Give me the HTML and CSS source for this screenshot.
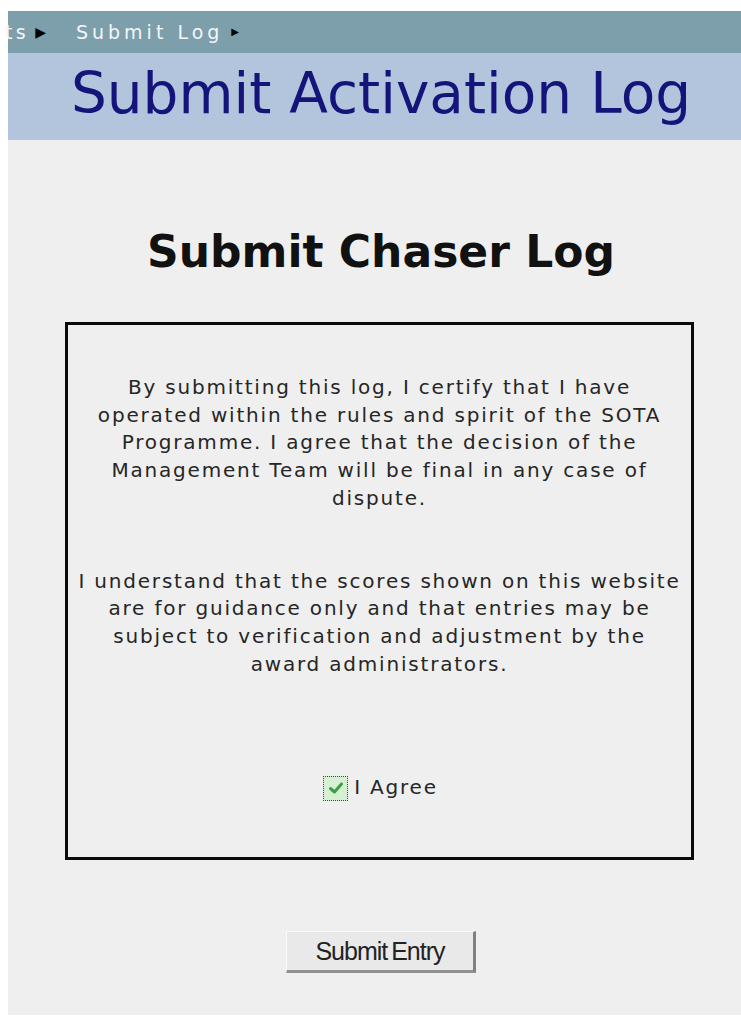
FILE: index.html
```html
<!DOCTYPE html>
<html lang="en">
<head>
<meta charset="utf-8">
<title>Submit Chaser Log</title>
<link rel="stylesheet" href="styles.css">
</head>
<body>
<div class="page">
  <nav class="crumbs">
    <span class="crumb first">ts</span><span class="arrow">&#9654;</span>
    <span class="crumb">Submit Log</span><span class="arrow small">&#9654;</span>
  </nav>
  <header class="banner">
    <h1 class="banner-title">Submit Activation Log</h1>
  </header>
  <main class="content">
    <h2 class="section-title">Submit Chaser Log</h2>
    <form class="log-form">
      <div class="terms">
        <p>By submitting this log, I certify that I have<br>operated within the rules and spirit of the SOTA<br>Programme. I agree that the decision of the<br>Management Team will be final in any case of<br>dispute.</p>
        <p>I understand that the scores shown on this website<br>are for guidance only and that entries may be<br>subject to verification and adjustment by the<br>award administrators.</p>
        <label class="agree">
          <span class="check">
            <svg width="16" height="14" viewBox="0 0 16 14"><path d="M2.5 7.5 L6.5 11 L13.5 3" fill="none" stroke="#3aa043" stroke-width="3" stroke-linecap="round" stroke-linejoin="round"/></svg>
          </span>
          <span>I Agree</span>
        </label>
      </div>
      <div class="actions">
        <button type="button" class="submit">Submit Entry</button>
      </div>
    </form>
  </main>
</div>
</body>
</html>
```

FILE: styles.css
```css
html, body {
  margin: 0;
  padding: 0;
  background: #ffffff;
  overflow: hidden;
}

body {
  padding: 11px 0 0 8px;
  font-family: "DejaVu Sans", Verdana, sans-serif;
}

.page {
  width: 744px;
}

/* breadcrumb strip */
.crumbs {
  height: 42px;
  background: #7d9fab;
  display: flex;
  align-items: center;
  color: #f4f6f8;
  font-size: 19px;
  letter-spacing: 4px;
  padding-bottom: 1px;
  box-sizing: border-box;
}

.crumb.first {
  margin-left: -3px;
  margin-right: 6px;
  letter-spacing: 3.4px;
}

.arrow {
  color: #000;
  font-size: 14px;
  margin-right: 30px;
  letter-spacing: 0;
}

.arrow.small {
  font-size: 10px;
  margin-left: 8px;
}

/* page title band */
.banner {
  height: 87px;
  background: #b3c5dd;
  display: flex;
  justify-content: center;
  align-items: center;
}

.banner-title {
  margin: 0;
  font-weight: normal;
  font-size: 56.5px;
  color: #14147a;
  line-height: 1;
  padding-bottom: 5px;
  padding-left: 2px;
}

/* grey content area */
.content {
  background: #efefef;
  height: 875px;
  padding-top: 84px;
  box-sizing: border-box;
  text-align: center;
}

.section-title {
  margin: 0 0 42px;
  font-size: 44px;
  font-weight: bold;
  color: #111;
  line-height: 56px;
  padding-left: 2px;
}

.terms {
  margin-left: 57px;
  width: 629px;
  height: 538px;
  border: 3px solid #0a0a0a;
  box-sizing: border-box;
  padding-top: 49px;
  color: #262626;
  font-size: 20px;
  letter-spacing: 1.8px;
  line-height: 27.7px;
}

.terms p {
  margin: 0 0 55px;
}

.agree {
  display: inline-flex;
  align-items: center;
  gap: 6px;
  margin-top: 41px;
  padding-left: 2px;
}

.check {
  width: 23px;
  height: 23px;
  background: #d6f0d3;
  border: 1px dotted #444;
  display: inline-flex;
  align-items: center;
  justify-content: center;
}

.actions {
  margin-top: 71px;
  padding-left: 2px;
}

.submit {
  font-family: "Liberation Sans", Arial, sans-serif;
  font-size: 25px;
  letter-spacing: -1px;
  word-spacing: -2px;
  color: #222;
  background: #e9e9e9;
  border: none;
  border-right: 3px solid #808080;
  border-bottom: 3px solid #909090;
  border-top: 1px solid #fafafa;
  border-left: 1px solid #fafafa;
  width: 190px;
  height: 42px;
  padding: 0;
}
```
